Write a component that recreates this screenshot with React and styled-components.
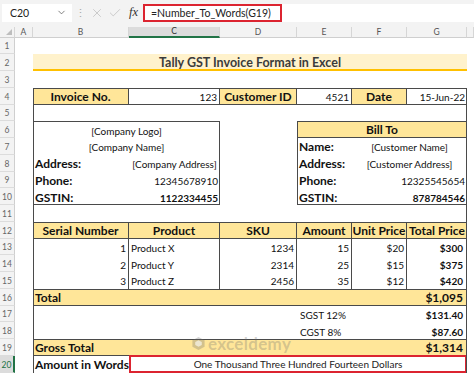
import React from 'react';
import styled, { createGlobalStyle } from 'styled-components';
import { X, Check, ChevronDown } from 'lucide-react';

const LINE = '#4a4a4a';
const GOLD = '#ffe699';
const PALE = '#fff2cc';
const RED = '#dc2430';
const GREEN = '#217346';

const GlobalStyle = createGlobalStyle`
  html, body { margin: 0; padding: 0; background: #fff; }
  body { font-family: Lato, "Noto Sans", sans-serif; }
  #root { width: 474px; height: 374px; overflow: hidden; }
`;

const Window = styled.div`
  width: 474px;
  height: 374px;
  overflow: hidden;
  background: #fff;
  display: flex;
  flex-direction: column;
`;

const FormulaBar = styled.div`
  flex: none;
  height: 27px;
  box-sizing: border-box;
  display: flex;
  align-items: center;
  background: #f3f3f3;
  padding: 0 0 2px 2px;
`;

const NameBox = styled.div`
  width: 70px;
  height: 18px;
  box-sizing: border-box;
  background: #fff;
  display: flex;
  align-items: center;
  justify-content: space-between;
  padding: 0 5px 0 8px;
  font-size: 10.5px;
  color: #222;
`;

const Dots = styled.span`
  width: 12px;
  margin-left: 2px;
  text-align: center;
  color: #a8a8a8;
  font-size: 11px;
`;

const FxGroup = styled.div`
  display: flex;
  align-items: center;
  gap: 4px;
  padding: 0 5px 0 4px;
  color: #b4b4b4;
`;

const Fx = styled.span`
  font-family: "Liberation Serif", serif;
  font-style: italic;
  font-size: 12.5px;
  color: #333;
  margin-left: 3px;
`;

const FormulaField = styled.div`
  flex: 1;
  height: 18px;
  background: #fff;
  display: flex;
  align-items: center;
`;

const FormulaText = styled.div`
  height: 18px;
  width: 139px;
  box-sizing: border-box;
  border: 2px solid ${RED};
  display: flex;
  align-items: center;
  padding-left: 6px;
  font-size: 10.5px;
  color: #222;
  white-space: nowrap;
`;

const Sheet = styled.div`
  flex: none;
  position: relative;
  display: grid;
  grid-template-columns: 15px 18px 96px 91px 77px 55px 55px 60px 1fr;
  grid-template-rows: 10.5px repeat(20, 16.75px);
`;

const ColHead = styled.div`
  grid-row: 1;
  grid-column: ${p => p.$c};
  box-sizing: border-box;
  background: ${p => (p.$sel ? '#dcdcdc' : '#f3f3f3')};
  border-right: 1px solid #d6d6d6;
  border-bottom: ${p => (p.$sel ? `2px solid ${GREEN}` : '1px solid #cfcfcf')};
  font-size: 8.5px;
  color: ${p => (p.$sel ? '#333' : '#555')};
  display: flex;
  align-items: center;
  justify-content: center;
`;

const Corner = styled.div`
  grid-row: 1;
  grid-column: 1;
  box-sizing: border-box;
  background: #f3f3f3;
  border-right: 1px solid #d6d6d6;
  border-bottom: 1px solid #cfcfcf;
  display: flex;
  align-items: flex-end;
  justify-content: flex-end;
  padding: 0 2px 2px 0;
`;

const Triangle = styled.span`
  width: 0;
  height: 0;
  border-left: 6px solid transparent;
  border-bottom: 6px solid #bdbdbd;
`;

const RowHead = styled.div`
  grid-column: 1;
  grid-row: ${p => p.$r + 1};
  box-sizing: border-box;
  background: ${p => (p.$sel ? '#dcdcdc' : '#f3f3f3')};
  border-bottom: 1px solid #dcdcdc;
  border-right: ${p => (p.$sel ? `2px solid ${GREEN}` : '1px solid #cfcfcf')};
  font-size: 8.5px;
  color: ${p => (p.$sel ? GREEN : '#666')};
  display: flex;
  align-items: flex-end;
  justify-content: center;
  padding-bottom: 2px;
`;

const side = (p, k) => (p.$bd && p.$bd.includes(k) ? `1px solid ${LINE}` : 'none');

const Cell = styled.div`
  grid-column: ${p => p.$c} / span ${p => p.$span || 1};
  grid-row: ${p => p.$r + 1};
  box-sizing: border-box;
  min-width: 0;
  display: flex;
  align-items: center;
  justify-content: ${p => ({ l: 'flex-start', c: 'center', r: 'flex-end' }[p.$a || 'l'])};
  padding: ${p => (p.$lg ? '1px' : '2px')} ${p => p.$pr ?? 2}px 0 ${p => p.$pl ?? 2}px;
  background: ${p => p.$bg || 'transparent'};
  font-size: ${p => (p.$lg ? 12 : 10)}px;
  font-weight: ${p => (p.$b ? 700 : 400)};
  color: #111;
  white-space: nowrap;
  border-top: ${p => side(p, 't')};
  border-bottom: ${p => side(p, 'b')};
  border-right: ${p => side(p, 'r')};
  border-left: ${p => side(p, 'l')};
`;

const Title = styled.div`
  grid-column: 3 / span 6;
  grid-row: 3;
  box-sizing: border-box;
  background: ${PALE};
  border-bottom: 2px solid #ffc000;
  display: flex;
  align-items: center;
  justify-content: center;
  font-size: 12.5px;
  font-weight: 700;
  color: #3b3b3b;
  padding-top: 1px;
`;

const Box = styled.div`
  grid-column: ${p => p.$c} / span ${p => p.$span};
  grid-row: ${p => p.$r + 1} / span ${p => p.$rspan};
  box-sizing: border-box;
  pointer-events: none;
  border: 1px solid ${LINE};
  ${p => (p.$sides ? 'border-top: none; border-bottom: none;' : '')}
`;

const WordsCell = styled.div`
  grid-column: 4 / span 5;
  grid-row: 21;
  box-sizing: border-box;
  border: 2px solid ${RED};
  margin-top: -1px;
  display: flex;
  align-items: center;
  justify-content: center;
  font-size: 10px;
  color: #222;
  white-space: nowrap;
`;

const Watermark = styled.div`
  position: absolute;
  left: 191px;
  top: 306px;
  display: flex;
  align-items: center;
  gap: 2px;
  color: rgba(110, 110, 110, 0.3);
  font-size: 17px;
  font-weight: 700;
  letter-spacing: 0.3px;
  pointer-events: none;
`;

const rows = Array.from({ length: 20 }, (_, i) => i + 1);
const letters = ['A', 'B', 'C', 'D', 'E', 'F', 'G'];

const items = [
  { n: 1, p: 'Product X', sku: 1234, q: 15, u: '$20', t: '$300' },
  { n: 2, p: 'Product Y', sku: 2314, q: 25, u: '$15', t: '$375' },
  { n: 3, p: 'Product Z', sku: 2456, q: 35, u: '$12', t: '$420' },
];

export default function App() {
  return (
    <Window>
      <GlobalStyle />
      <FormulaBar>
        <NameBox>
          C20
          <ChevronDown size={11} color="#555" strokeWidth={1.6} />
        </NameBox>
        <Dots>⋮</Dots>
        <FxGroup>
          <X size={14} strokeWidth={1.1} />
          <Check size={14} strokeWidth={1.1} />
          <Fx>fx</Fx>
        </FxGroup>
        <FormulaField>
          <FormulaText>=Number_To_Words(G19)</FormulaText>
        </FormulaField>
      </FormulaBar>

      <Sheet>
        <Corner>
          <Triangle />
        </Corner>
        {letters.map((l, i) => (
          <ColHead key={l} $c={i + 2} $sel={l === 'C'}>
            {l}
          </ColHead>
        ))}
        <ColHead $c={9} />
        {rows.map(r => (
          <RowHead key={r} $r={r} $sel={r === 20}>
            {r}
          </RowHead>
        ))}

        <Title>Tally GST Invoice Format in Excel</Title>

        <Cell $r={4} $c={3} $a="c" $lg $b $bg={GOLD} $bd="tbr">Invoice No.</Cell>
        <Cell $r={4} $c={4} $a="r" $bd="tbr">123</Cell>
        <Cell $r={4} $c={5} $a="c" $lg $b $bg={GOLD} $bd="tbr">Customer ID</Cell>
        <Cell $r={4} $c={6} $a="r" $bd="tbr">4521</Cell>
        <Cell $r={4} $c={7} $a="c" $lg $b $bg={GOLD} $bd="tbr">Date</Cell>
        <Cell $r={4} $c={8} $a="r" $bd="tb">15-Jun-22</Cell>

        <Cell $r={6} $c={3} $span={2} $a="c">[Company Logo]</Cell>
        <Cell $r={7} $c={3} $span={2} $a="c">[Company Name]</Cell>
        <Cell $r={8} $c={3} $lg $b>Address:</Cell>
        <Cell $r={8} $c={4} $a="c">[Company Address]</Cell>
        <Cell $r={9} $c={3} $lg $b>Phone:</Cell>
        <Cell $r={9} $c={4} $a="r">12345678910</Cell>
        <Cell $r={10} $c={3} $lg $b>GSTIN:</Cell>
        <Cell $r={10} $c={4} $a="r" $b>1122334455</Cell>

        <Cell $r={6} $c={6} $span={3} $a="c" $lg $b $bg={GOLD} $bd="b">Bill To</Cell>
        <Cell $r={7} $c={6} $lg $b>Name:</Cell>
        <Cell $r={7} $c={7} $span={2} $a="c">[Customer Name]</Cell>
        <Cell $r={8} $c={6} $lg $b>Address:</Cell>
        <Cell $r={8} $c={7} $span={2} $a="c">[Customer Address]</Cell>
        <Cell $r={9} $c={6} $lg $b>Phone:</Cell>
        <Cell $r={9} $c={7} $span={2} $a="r">12325545654</Cell>
        <Cell $r={10} $c={6} $lg $b>GSTIN:</Cell>
        <Cell $r={10} $c={7} $span={2} $a="r" $b>878784546</Cell>

        <Cell $r={12} $c={3} $a="c" $lg $b $bg={GOLD} $bd="tbr">Serial Number</Cell>
        <Cell $r={12} $c={4} $a="c" $lg $b $bg={GOLD} $bd="tbr">Product</Cell>
        <Cell $r={12} $c={5} $a="c" $lg $b $bg={GOLD} $bd="tbr">SKU</Cell>
        <Cell $r={12} $c={6} $a="c" $lg $b $bg={GOLD} $bd="tbr">Amount</Cell>
        <Cell $r={12} $c={7} $a="c" $lg $b $bg={GOLD} $bd="tbr">Unit Price</Cell>
        <Cell $r={12} $c={8} $a="c" $lg $b $bg={GOLD} $bd="tb">Total Price</Cell>

        {items.map((it, i) => (
          <React.Fragment key={it.n}>
            <Cell $r={13 + i} $c={3} $a="r" $bd="r">{it.n}</Cell>
            <Cell $r={13 + i} $c={4} $bd="r">{it.p}</Cell>
            <Cell $r={13 + i} $c={5} $a="r" $bd="r">{it.sku}</Cell>
            <Cell $r={13 + i} $c={6} $a="r" $bd="r">{it.q}</Cell>
            <Cell $r={13 + i} $c={7} $a="r" $bd="r">{it.u}</Cell>
            <Cell $r={13 + i} $c={8} $a="r" $pr={4} $b>{it.t}</Cell>
          </React.Fragment>
        ))}

        <Cell $r={16} $c={3} $span={5} $lg $b $bg={GOLD} $bd="tb">Total</Cell>
        <Cell $r={16} $c={8} $a="r" $pr={4} $lg $b $bg={GOLD} $bd="tb">$1,095</Cell>
        <Cell $r={17} $c={6} $span={2} $pl={3}>SGST 12%</Cell>
        <Cell $r={17} $c={8} $a="r" $pr={4} $b>$131.40</Cell>
        <Cell $r={18} $c={6} $span={2} $pl={3}>CGST 8%</Cell>
        <Cell $r={18} $c={8} $a="r" $pr={4} $b>$87.60</Cell>
        <Cell $r={19} $c={3} $span={5} $lg $b $bg={GOLD} $bd="tb">Gross Total</Cell>
        <Cell $r={19} $c={8} $a="r" $pr={4} $lg $b $bg={GOLD} $bd="tb">$1,314</Cell>
        <Cell $r={20} $c={3} $lg $b>Amount in Words</Cell>
        <WordsCell>One Thousand Three Hundred Fourteen Dollars</WordsCell>

        <Box $c={3} $span={6} $r={4} $rspan={17} $sides />
        <Box $c={3} $span={2} $r={6} $rspan={5} />
        <Box $c={6} $span={3} $r={6} $rspan={5} />

        <Watermark>
          <svg width="15" height="15" viewBox="0 0 16 16">
            <path d="M8 1 L14.5 4.6 V11.4 L8 15 L1.5 11.4 V4.6 Z" fill="currentColor" />
            <path d="M8 4.5 L11.5 6.5 V9.5 L8 11.5 L4.5 9.5 V6.5 Z" fill="#fff" opacity="0.6" />
          </svg>
          exceldemy
        </Watermark>
      </Sheet>
    </Window>
  );
}
